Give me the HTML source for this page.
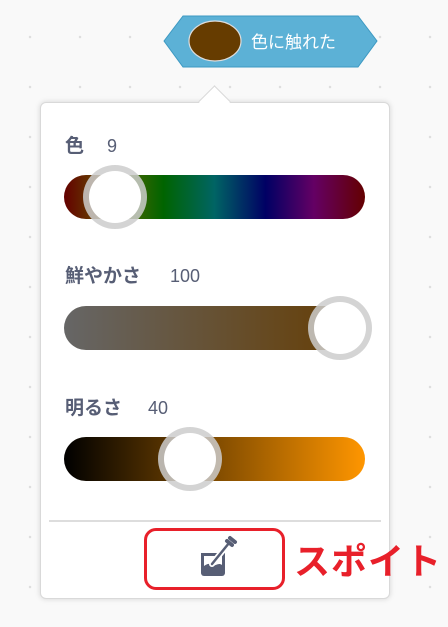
<!DOCTYPE html>
<html><head><meta charset="utf-8"><style>
html,body{margin:0;padding:0}
body{width:448px;height:627px;position:relative;overflow:hidden;background-color:#f9f9f9;
background-image:radial-gradient(circle,#ddd 1px,transparent 1.5px);background-size:50px 50px;background-position:5px 12px;
font-family:"Liberation Sans","Noto Sans CJK JP",sans-serif}
.abs{position:absolute}
.panel{left:40px;top:102px;width:348px;height:495px;background:#fff;border:1px solid #d9d9d9;border-radius:6px;box-shadow:0 0 6px rgba(0,0,0,.15)}
.arrow{left:203px;top:90px;width:22px;height:22px;background:#fff;transform:rotate(45deg);border-left:1px solid #d9d9d9;border-top:1px solid #d9d9d9}
.lab{font-size:19px;color:#575e75;font-weight:bold}
.lab span{font-weight:normal;font-size:18px}
.track{left:64px;width:301px;height:44px;border-radius:22px}
.thumb{width:52px;height:52px;border-radius:50%;background:#fff;box-shadow:0 0 0 6px rgba(205,205,205,.85);margin:-26px 0 0 -26px}
</style></head><body>
<svg class="abs" style="left:163px;top:15px" width="216" height="54"><polygon points="1,26 20,1 195,1 214,26 195,52 20,52" fill="#5cb1d6" stroke="#3d99c2"/><ellipse cx="52" cy="26" rx="26" ry="20" fill="#663c00" stroke="#ddd" stroke-width="1.2"/><text x="88" y="33" fill="#fff" font-size="17" font-family="Liberation Sans,Noto Sans CJK JP,sans-serif">色に触れた</text></svg>
<div class="abs panel"></div>
<div class="abs arrow"></div>
<div class="abs lab" style="left:65px;top:131px">色<span style="position:absolute;left:42px;top:5px">9</span></div>
<div class="abs track" style="top:175px;background:linear-gradient(90deg,#640000,#646400 17%,#006400 33%,#006464 50%,#000064 67%,#640064 83%,#640000)"></div>
<div class="abs thumb" style="left:115px;top:197px"></div>
<div class="abs lab" style="left:65px;top:261px">鮮やかさ<span style="position:absolute;left:105px;top:5px">100</span></div>
<div class="abs track" style="top:306px;background:linear-gradient(90deg,#666,#663c00)"></div>
<div class="abs thumb" style="left:340px;top:328px"></div>
<div class="abs lab" style="left:65px;top:393px">明るさ<span style="position:absolute;left:83px;top:5px">40</span></div>
<div class="abs track" style="top:437px;background:linear-gradient(90deg,#000,#ff9600)"></div>
<div class="abs thumb" style="left:190px;top:459px"></div>
<div class="abs" style="left:49px;top:520px;width:332px;height:2px;background:#ddd"></div>
<div class="abs" style="left:144px;top:528px;width:135px;height:56px;border:3px solid #e8202a;border-radius:12px"></div>
<svg class="abs" style="left:198px;top:535px" width="42" height="44" viewBox="0 0 42 44">
<path d="M3 18 h24 v20 a3 3 0 0 1 -3 3 h-18 a3 3 0 0 1 -3 -3z" fill="#575e75"/>
<path d="M6 21 h18 v9 c-4 -3 -7 2 -10 0 c-3 -2 -5 -1 -8 1z" fill="#fff"/>
<path d="M14 29 L31 8" stroke="#fff" stroke-width="6" stroke-linecap="round"/>
<path d="M14 29 L31 8" stroke="#575e75" stroke-width="2.5" stroke-linecap="round"/>
<path d="M29 6 l5 4 M32 3 l5 4" stroke="#575e75" stroke-width="4" stroke-linecap="round"/>
</svg>
<div class="abs" style="left:294px;top:533px;font-size:36px;font-weight:bold;color:#e8202a;letter-spacing:1px">スポイト</div>
</body></html>
